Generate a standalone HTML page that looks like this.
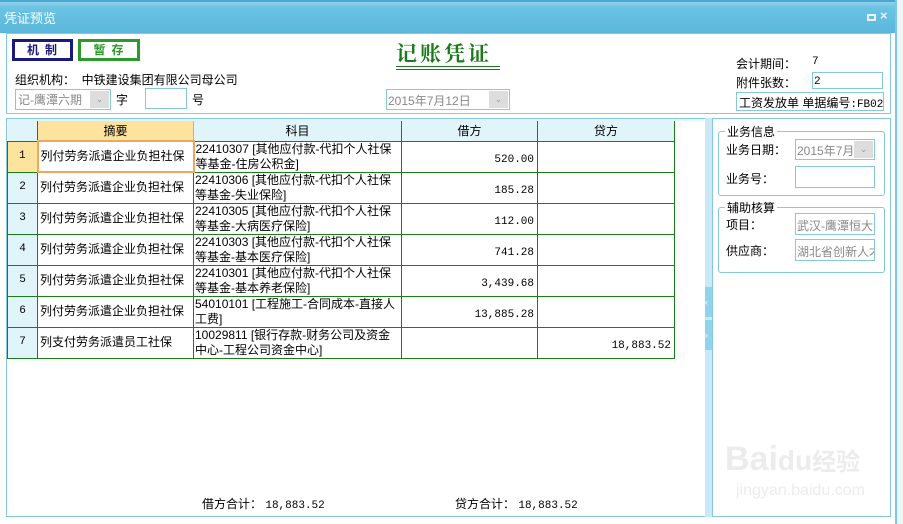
<!DOCTYPE html>
<html><head><meta charset="utf-8"><style>
*{margin:0;padding:0;box-sizing:border-box}
body{width:903px;height:524px;overflow:hidden;background:#fff;font-family:"Liberation Sans","Noto Sans CJK SC",sans-serif;font-size:12px;color:#000;position:relative}
.a{position:absolute}
.tb{left:0;top:0;width:896px;height:33px;background:linear-gradient(#8fd0ea 0,#6ac3e4 6px,#5ab5da 33px);border-top:2px solid #4aa8d0}
.box{border:1px solid #86c9dc}
table{border-collapse:collapse;position:absolute;left:7px;top:121px;table-layout:fixed;width:667px}
td{border:1px solid #1a7f1a;height:31px;vertical-align:middle;font-size:12px;line-height:15px;white-space:nowrap;overflow:hidden;padding:0}
th{height:20px;background:#e1f4fa;border:1px solid #1a7f1a;border-top:none;font-weight:normal;font-size:12px;padding:0}
td.n{background:#e1f4fa;text-align:center;font-family:"Liberation Mono",monospace;font-size:11px}
td.m{padding-left:2px;font-size:12px}
td.k{padding-left:1px;font-size:12px;line-height:15px;vertical-align:top;padding-top:0;white-space:normal}
td.r{text-align:right;padding-right:3px;font-family:"Liberation Mono",monospace;font-size:11px;padding-top:8px}
.mono{font-family:"Liberation Mono",monospace;font-size:11px}
.inp{border:1px solid #86c9dc;background:#fff;color:#888}
.dd{position:absolute;right:1px;top:1px;width:19px;height:17px;background:#ddd;color:#999;font-size:9px;text-align:center;line-height:17px}
.fs{border:1px solid #86c9dc;border-radius:3px}
.lg{position:absolute;left:6px;top:-9px;background:#fff;padding:0 2px;font-size:12px}
</style></head><body>
<div class="a tb"></div>
<div class="a" style="left:895px;top:0;width:8px;height:524px;background:#eef4f7;border-left:2px solid #7cc7e3"></div>
<div class="a" style="left:4px;top:8px;color:#fff;font-size:13px">凭证预览</div>
<div class="a" style="left:867px;top:14px;width:9px;height:7px;border:2px solid #e8f6fc"></div>
<div class="a" style="left:880px;top:8px;color:#e8f6fc;font-size:13px;font-weight:bold">×</div>

<div class="a box" style="left:6px;top:33px;width:885px;height:81px"></div>
<div class="a" style="left:12px;top:39px;width:61px;height:22px;border:3px solid #1a1a7a;color:#1a1a7a;text-align:center;font-weight:bold;line-height:16px;font-size:12px;letter-spacing:6px;padding-left:5px">机制</div>
<div class="a" style="left:78px;top:39px;width:62px;height:22px;border:3px solid #2a9a2a;color:#2a9a2a;text-align:center;font-weight:bold;line-height:16px;font-size:12px;letter-spacing:6px;padding-left:5px">暂存</div>
<div class="a" style="left:396px;top:38px;color:#1a7a1a;font-size:21px;font-weight:bold;letter-spacing:3px;font-family:'Noto Serif CJK SC',serif">记账凭证</div>
<div class="a" style="left:396px;top:66px;width:104px;height:4px;border-top:1px solid #1a7a1a;border-bottom:1px solid #1a7a1a"></div>
<div class="a" style="left:15px;top:71px;font-size:12px">组织机构：&nbsp;&nbsp;中铁建设集团有限公司母公司</div>
<div class="a inp" style="left:15px;top:89px;width:96px;height:21px;padding:1px 2px;font-size:12px">记-鹰潭六期<div class="dd">⌄</div></div>
<div class="a" style="left:116px;top:91px;font-size:12px">字</div>
<div class="a inp" style="left:145px;top:88px;width:42px;height:21px"></div>
<div class="a" style="left:192px;top:91px;font-size:12px">号</div>
<div class="a inp" style="left:386px;top:89px;width:124px;height:21px;padding:2px 1px;font-size:12px">2015年7月12日<div class="dd">⌄</div></div>
<div class="a" style="left:736px;top:55px">会计期间：</div>
<div class="a mono" style="left:812px;top:56px">7</div>
<div class="a" style="left:736px;top:74px">附件张数：</div>
<div class="a inp" style="left:812px;top:72px;width:71px;height:17px;color:#000;padding-left:1px" ><span class="mono">2</span></div>
<div class="a box" style="left:736px;top:92px;width:148px;height:19px;overflow:hidden;white-space:nowrap;padding:1px 2px">工资发放单 单据编号<span class="mono">:FB02</span></div>

<div class="a box" style="left:6px;top:118px;width:701px;height:399px"></div>
<div class="a" style="left:705px;top:118px;width:7px;height:399px;background:#c8e9f5"></div>
<div class="a" style="left:705px;top:287px;width:7px;height:30px;background:#8fd3ec;color:#fff;font-size:9px;line-height:30px">‹</div>
<div class="a" style="left:705px;top:320px;width:7px;height:30px;background:#8fd3ec;color:#fff;font-size:9px;line-height:30px">›</div>
<div class="a" style="left:7px;top:119px;width:697px;height:2px;background:#e1f4fa"></div>
<table>
<colgroup><col style="width:30px"><col style="width:156px"><col style="width:208px"><col style="width:136px"><col style="width:137px"></colgroup>
<tr><th style="border-left:none"></th><th style="background:#fde39d;border-right:1px solid #f2a65c">摘要</th><th>科目</th><th>借方</th><th>贷方</th></tr>
<tr><td class="n" style="background:#fde39d">1</td><td class="m" style="border:2px solid #f2a65c">列付劳务派遣企业负担社保</td><td class="k">22410307&nbsp;[其他应付款-代扣个人社保等基金-住房公积金]</td><td class="r">520.00</td><td></td></tr>
<tr><td class="n">2</td><td class="m">列付劳务派遣企业负担社保</td><td class="k">22410306&nbsp;[其他应付款-代扣个人社保等基金-失业保险]</td><td class="r">185.28</td><td></td></tr>
<tr><td class="n">3</td><td class="m">列付劳务派遣企业负担社保</td><td class="k">22410305&nbsp;[其他应付款-代扣个人社保等基金-大病医疗保险]</td><td class="r">112.00</td><td></td></tr>
<tr><td class="n">4</td><td class="m">列付劳务派遣企业负担社保</td><td class="k">22410303&nbsp;[其他应付款-代扣个人社保等基金-基本医疗保险]</td><td class="r">741.28</td><td></td></tr>
<tr><td class="n">5</td><td class="m">列付劳务派遣企业负担社保</td><td class="k">22410301&nbsp;[其他应付款-代扣个人社保等基金-基本养老保险]</td><td class="r">3,439.68</td><td></td></tr>
<tr><td class="n">6</td><td class="m">列付劳务派遣企业负担社保</td><td class="k">54010101&nbsp;[工程施工-合同成本-直接人工费]</td><td class="r">13,885.28</td><td></td></tr>
<tr><td class="n">7</td><td class="m">列支付劳务派遣员工社保</td><td class="k">10029811&nbsp;[银行存款-财务公司及资金中心-工程公司资金中心]</td><td></td><td class="r">18,883.52</td></tr>
</table>
<div class="a" style="left:202px;top:495px">借方合计：&nbsp;<span class="mono">18,883.52</span></div>
<div class="a" style="left:455px;top:495px">贷方合计：&nbsp;<span class="mono">18,883.52</span></div>

<div class="a box" style="left:712px;top:118px;width:179px;height:399px"></div>
<div class="a fs" style="left:718px;top:131px;width:167px;height:65px"><div class="lg">业务信息</div></div>
<div class="a" style="left:726px;top:141px;font-size:12px">业务日期：</div>
<div class="a inp" style="left:795px;top:139px;width:80px;height:21px;padding:2px 1px;overflow:hidden;white-space:nowrap;font-size:12px">2015年7月1<div class="dd">⌄</div></div>
<div class="a" style="left:726px;top:170px;font-size:12px">业务号：</div>
<div class="a inp" style="left:795px;top:166px;width:80px;height:22px"></div>
<div class="a fs" style="left:718px;top:207px;width:167px;height:66px"><div class="lg">辅助核算</div></div>
<div class="a" style="left:726px;top:216px;font-size:12px">项目：</div>
<div class="a inp" style="left:795px;top:213px;width:80px;height:22px;padding:3px 1px;overflow:hidden;white-space:nowrap;font-size:12px">武汉-鹰潭恒大</div>
<div class="a" style="left:726px;top:242px;font-size:12px">供应商：</div>
<div class="a inp" style="left:795px;top:239px;width:80px;height:22px;padding:3px 1px;overflow:hidden;white-space:nowrap;font-size:12px">湖北省创新人才</div>
<div class="a" style="left:725px;top:440px;color:#ececec;font-size:34px;font-weight:bold">Bai<span style="font-size:28px">du</span><span style="font-size:24px">经验</span></div>
<div class="a" style="left:736px;top:482px;color:#ececec;font-size:16px">jingyan.baidu.com</div>
</body></html>
